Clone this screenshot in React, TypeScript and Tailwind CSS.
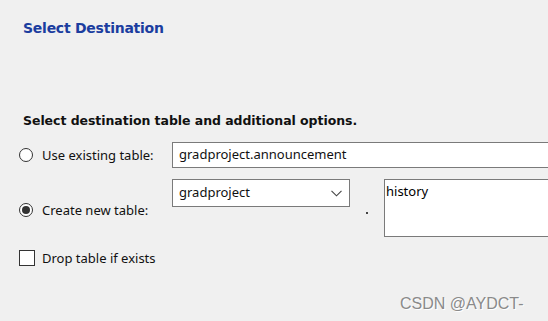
import React from "react";

function Radio({ checked }: { checked?: boolean }) {
  return (
    <div className="w-[14px] h-[14px] rounded-full border border-[#333333] bg-white flex items-center justify-center shrink-0">
      {checked && <div className="w-[8px] h-[8px] rounded-full bg-[#333333]" />}
    </div>
  );
}

export default function App() {
  const ui = { fontFamily: '"Noto Sans", "Open Sans", sans-serif' };
  return (
    <div className="w-[548px] h-[321px] bg-[#f0f0f0] relative overflow-hidden text-[#111]" style={ui}>
      <div className="pl-[23px] pt-[18px] font-bold text-[#1b3d9f] leading-[20px]" style={{ fontFamily: '"DejaVu Sans", Verdana, sans-serif', fontSize: 14, letterSpacing: "-0.25px" }}>
        Select Destination
      </div>
      <div className="pl-[23px] mt-[74px] font-bold leading-[18px]" style={{ fontFamily: '"DejaVu Sans", Verdana, sans-serif', fontSize: 12.5, letterSpacing: "-0.05px" }}>
        Select destination table and additional options.
      </div>
      <div className="mt-[12px] flex items-center h-[26px]">
        <div className="pl-[19px] w-[172px] flex items-center gap-[9px] shrink-0">
          <Radio />
          <span className="text-[13px] leading-[16px]">Use existing table:</span>
        </div>
        <div className="h-[26px] w-[400px] shrink-0 bg-white border border-[#7a7a7a] pl-[6px] flex items-center text-[13px]">
          gradproject.announcement
        </div>
      </div>
      <div className="mt-[11px] flex items-start">
        <div className="pl-[19px] w-[172px] flex items-center gap-[9px] shrink-0 mt-[23px]">
          <Radio checked />
          <span className="text-[13px] leading-[16px]">Create new table:</span>
        </div>
        <div className="h-[28px] w-[178px] shrink-0 bg-white border border-[#7a7a7a] pl-[6px] pr-[7px] flex items-center justify-between text-[13px]">
          <span>gradproject</span>
          <svg width="11" height="7" viewBox="0 0 11 7" fill="none">
            <path d="M0.5 0.8 L5.5 5.8 L10.5 0.8" stroke="#444" strokeWidth="1.1" />
          </svg>
        </div>
        <div className="w-[34px] shrink-0 flex justify-center pt-[33px] pr-[1px]">
          <div className="w-[2px] h-[2px] bg-[#444]" />
        </div>
        <div className="h-[58px] w-[200px] shrink-0 bg-white border border-[#7a7a7a] pl-[1px] pt-[3px] text-[13px] leading-[16px] text-[#000]">
          history
        </div>
      </div>
      <div className="mt-[13px] pl-[19px] flex items-center gap-[7px]">
        <div className="w-[16px] h-[16px] border border-[#333] bg-white shrink-0" />
        <span className="text-[13px] leading-[16px]">Drop table if exists</span>
      </div>
      <div
        className="absolute left-[400px] top-[294px] text-[16px] text-[#8a8a8a] leading-[20px]"
        style={{ fontFamily: '"Liberation Sans", Arial, sans-serif', textShadow: "1px 1px 0 #ffffff" }}
      >
        CSDN @AYDCT-
      </div>
    </div>
  );
}
